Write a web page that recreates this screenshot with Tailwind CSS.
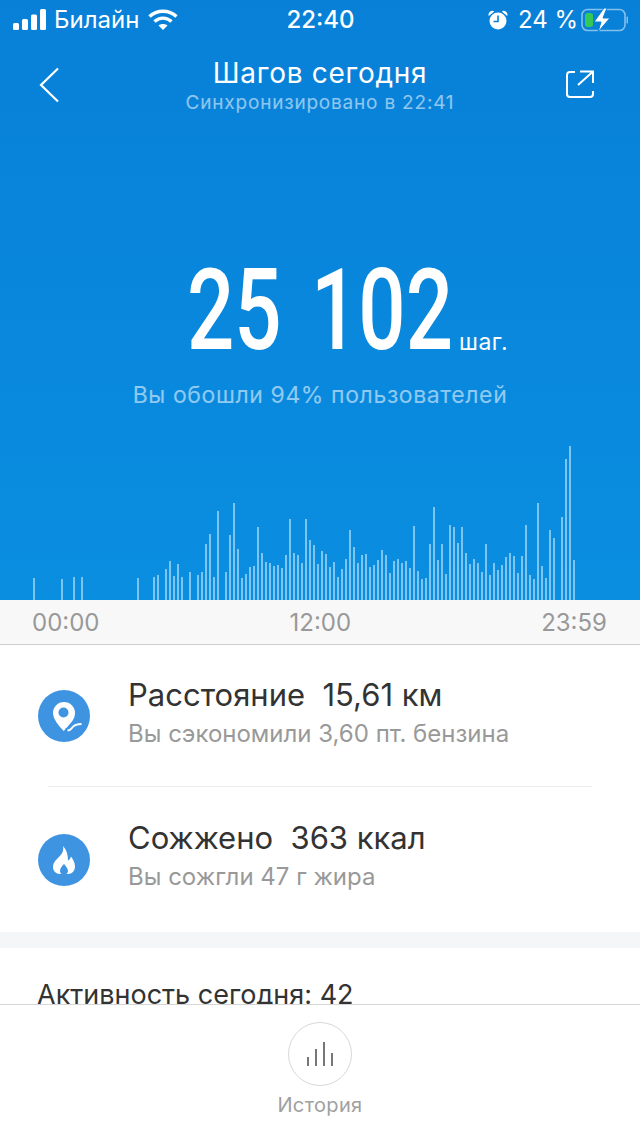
<!DOCTYPE html>
<html lang="ru">
<head>
    <meta charset="UTF-8">
    <meta name="viewport" content="width=device-width, initial-scale=1.0">
    <title>Шагов сегодня</title>
    <script src="https://cdn.jsdelivr.net/npm/@tailwindcss/browser@4"></script>
</head>
<body class="bg-white font-['Inter',sans-serif]">
<div class="relative w-[640px] h-[1136px] overflow-hidden flex flex-col">
    <!-- Blue header -->
    <div class="h-[600px] shrink-0 flex flex-col bg-gradient-to-b from-[#0880d8] to-[#0a8ee0] text-white">
        <!-- Status bar -->
        <div class="h-[40px] shrink-0 flex items-center justify-between pl-[13px] pr-[12px] text-[24px]">
            <div class="flex-1 flex items-center">
                <svg width="34" height="22" viewBox="0 0 34 22" fill="#fff"><rect x="0" y="14" width="6" height="7" rx="1.5"/><rect x="9" y="10" width="6" height="11" rx="1.5"/><rect x="18" y="5.500" width="6" height="15.500" rx="1.500"/><rect x="27" y="0" width="6" height="21" rx="1.500"/></svg>
                <span class="ml-[7px]">Билайн</span>
                <svg class="ml-[9px]" width="30" height="22" viewBox="0 0 30 22" fill="none" stroke="#fff" stroke-width="3.400"><path d="M1.500 7.500C9 .5 21 .5 28.500 7.500"/><path d="M6.500 12.500C11.500 8 18.500 8 23.500 12.500"/><path d="M15 21l-4.500-4.600c2.500-2 6.500-2 9 0z" fill="#fff" stroke="none"/></svg>
            </div>
            <div class="font-medium">22:40</div>
            <div class="flex-1 flex items-center justify-end">
                <svg width="20" height="22" viewBox="0 0 20 22" fill="#fff"><circle cx="10" cy="12" r="8.500"/><path d="M.8 7a3.800 3.800 0 0 1 5.400-4.600zM19.200 7a3.800 3.800 0 0 0-5.400-4.600z"/><path d="M10 6.500v6h-4.500" fill="none" stroke="#0880d8" stroke-width="1.600"/></svg>
                <span class="ml-[10px]">24 %</span>
                <svg class="ml-[3px]" width="47" height="24" viewBox="0 0 47 24" fill="none"><rect x="1" y="1.500" width="43" height="21" rx="5.500" stroke="#fff" stroke-opacity="0.500" stroke-width="1.600"/><rect x="45.500" y="8.500" width="1.500" height="7" rx=".7" fill="#fff" fill-opacity="0.500"/><rect x="4" y="5" width="8" height="14" rx="2.500" fill="#34c759"/><path d="M23 0L13 14h7l-3 10 12-14h-7l4-10z" fill="#fff" stroke="#0880d8" stroke-width="1"/></svg>
            </div>
        </div>
        <!-- Title row -->
        <div class="relative h-[80px] shrink-0 flex flex-col items-center">
            <div class="mt-[15px] text-[28px] leading-[36px] tracking-[0.7px]">Шагов сегодня</div>
            <div class="mt-px text-[19px] leading-[22px] tracking-[0.8px] text-white/55">Синхронизировано в 22:41</div>
            <svg class="absolute left-[38px] top-[26px]" width="24" height="38" viewBox="0 0 24 38" fill="none" stroke="#fff" stroke-width="2.200"><path d="M20 2.500L3 19l17 16.500"/></svg>
            <svg class="absolute left-[564px] top-[28px]" width="32" height="32" viewBox="0 0 32 32" fill="none" stroke="#fff" stroke-width="2"><path d="M11 4H6a3 3 0 0 0-3 3v19a3 3 0 0 0 3 3h20a3 3 0 0 0 3-3v-3"/><path d="M14 17L29 3.500M16 3.500h13V15"/></svg>
        </div>
        <!-- Step count -->
        <div class="mt-[135px] h-[110px] flex items-end pl-[187px]">
            <span class="w-[265px] whitespace-nowrap origin-left scale-x-[0.73] [word-spacing:12px] font-['Roboto',sans-serif] font-medium text-[114px] leading-[110px]">25 102</span>
            <span class="ml-[7px] mb-[9px] text-[23px] leading-[28px] tracking-[0.5px]">шаг.</span>
        </div>
        <div class="mt-[15px] text-center text-[23px] leading-[30px] tracking-[0.6px] text-white/55">Вы обошли 94% пользователей</div>
        <!-- Bars -->
        <div id="bars" class="mt-auto h-[160px] flex items-end gap-[2px] pl-[33px]"></div>
    </div>

    <!-- Time axis -->
    <div class="h-[45px] shrink-0 flex items-center justify-between pl-[32px] pr-[33px] pt-[2px] bg-[#f8f8f8] border-b border-[#cfcfcf] text-[24px] text-[#999999]">
        <span>00:00</span><span>12:00</span><span>23:59</span>
    </div>

    <!-- Stats -->
    <div class="h-[287px] shrink-0 flex flex-col">
        <div class="h-[141px] mx-[38px] flex items-center">
            <svg width="52" height="52" viewBox="0 0 52 52"><circle cx="26" cy="26" r="26" fill="#3f94e2"/><path d="M26 12a11 11 0 0 0-11 11c0 6 6 13 10.700 18 1.500-1.500 3-3.200 4.500-5 2.500-3 6.800-7 6.800-13a11 11 0 0 0-11-11z" fill="#fff"/><circle cx="25.500" cy="22.500" r="5" fill="#3f94e2"/><path d="M27.500 41c4 0 5-2 6.500-4s3.500-3 10-3" fill="none" stroke="#3f94e2" stroke-width="5.500"/><path d="M29.500 40.500c3 0 3.700-1.500 5-3.200s3-3.300 9-3.300" fill="none" stroke="#fff" stroke-width="1.800"/></svg>
            <div class="ml-[38px] pb-[6px]">
                <div class="mb-[5px] text-[31px] leading-[38px] text-[#333333]">Расстояние&nbsp; 15,61 км</div>
                <div class="text-[24px] leading-[30px] text-[#999999]">Вы сэкономили 3,60 пт. бензина</div>
            </div>
        </div>
        <div class="mx-[48px] h-px bg-[#ececec]"></div>
        <div class="h-[145px] mx-[38px] flex items-center">
            <svg width="52" height="52" viewBox="0 0 52 52"><circle cx="26" cy="26" r="26" fill="#3f94e2"/><path d="M25 12c1 5-1 8-4 11-3 3-6 5.500-6 10 0 4 3 7 7 7h8c4 0 7-3 7-7.500 0-4-2-7-4-10-.5 2-1.500 3-3 4 0-6-1.500-11-5-14.500z" fill="#fff"/><path d="M26 30c-2 2-4 4-4 7 0 1.500.8 3 2 3h4c1.200 0 2-1.500 2-3 0-3-2.500-5-4-7z" fill="#3f94e2"/></svg>
            <div class="ml-[38px] pb-[8px]">
                <div class="mb-[5px] text-[31px] leading-[38px] text-[#333333]">Сожжено&nbsp; 363 ккал</div>
                <div class="text-[24px] leading-[30px] text-[#999999]">Вы сожгли 47 г жира</div>
            </div>
        </div>
    </div>

    <!-- Activity, cut off by the tab bar -->
    <div class="h-[16px] shrink-0 bg-[#f5f6f8]"></div>
    <div class="pl-[37px] pt-[30px] text-[27px] leading-[34px] text-[#333333]">Активность сегодня: 42</div>

    <!-- Bottom bar -->
    <div class="absolute left-0 right-0 top-[1004px] h-[132px] bg-white border-t border-[#d6d6d6] flex flex-col items-center">
        <div class="mt-[17px] w-[64px] h-[64px] rounded-full border-[1.5px] border-[#d8d8d8] flex items-center justify-center">
            <svg width="28" height="26" viewBox="0 0 28 26" fill="none" stroke="#777777" stroke-width="2"><path d="M2 25v-9M10 25V8M18 25V1M26 25V12"/></svg>
        </div>
        <div class="mt-[6px] text-[20px] leading-[26px] tracking-[0.35px] text-[#a0a0a0]">История</div>
    </div>
</div>
<script>
    var heights = [22,0,0,0,0,0,0,21,0,0,23,0,23,0,0,0,0,0,0,0,0,0,0,0,0,0,22,0,0,0,23,25,0,31,39,24,36,23,0,28,0,25,28,56,66,23,89,0,28,65,97,51,22,26,33,34,73,47,38,37,34,35,32,45,81,47,45,37,81,60,55,36,49,46,33,38,23,31,41,70,53,37,45,46,33,35,40,50,45,27,39,41,37,39,32,74,29,21,22,56,93,40,56,26,75,73,57,73,47,36,41,37,28,56,25,37,30,35,43,47,44,27,44,75,25,21,97,34,22,70,62,0,83,141,154,40];
    var bars = document.getElementById('bars');
    heights.forEach(function (h) {
        var bar = document.createElement('div');
        bar.className = 'w-[2px] shrink-0 bg-[#7cc4f1]';
        bar.style.height = h + 'px';
        bars.appendChild(bar);
    });
</script>
</body>
</html>
